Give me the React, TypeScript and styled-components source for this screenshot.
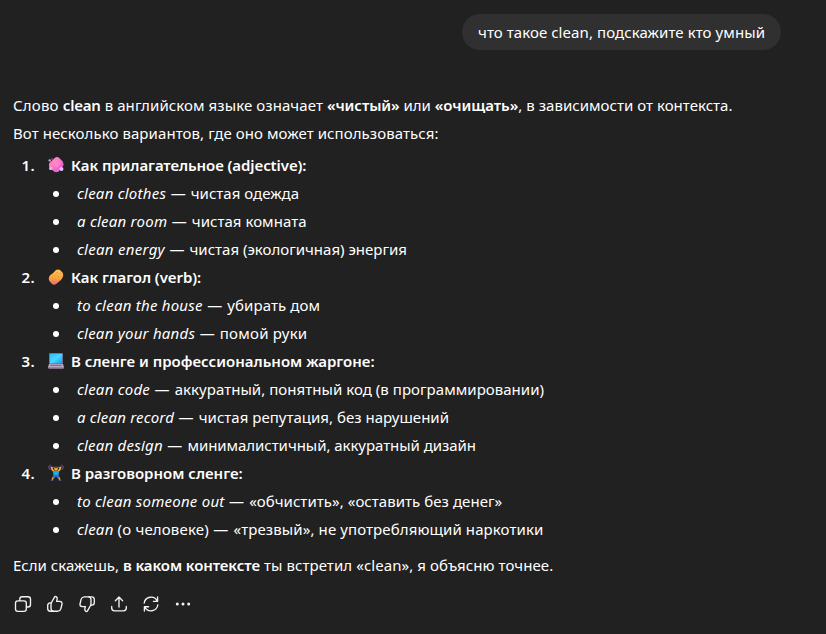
import React from 'react';
import styled, { createGlobalStyle } from 'styled-components';

const GlobalStyle = createGlobalStyle`
  * { box-sizing: border-box; }
  body {
    margin: 0;
    background: #212121;
    color: #fff;
    font-family: "Noto Sans", "Open Sans", sans-serif;
    font-size: 15px;
    line-height: 28px;
    letter-spacing: 0.08px;
  }
`;

const Thread = styled.main`
  display: flex;
  flex-direction: column;
  height: 634px;
  padding: 14px 45px 0 13px;
  overflow: hidden;
  white-space: nowrap;
`;

const UserBubble = styled.div`
  align-self: flex-end;
  width: 319px;
  height: 36px;
  padding: 4px 16px;
  border-radius: 18px;
  background: #303030;
`;

const Answer = styled.article`
  margin-top: 41px;
`;

const Paragraph = styled.p`
  margin: 0;
`;

const Strong = styled.strong<{ $tracking?: number }>`
  font-weight: 600;
  letter-spacing: ${p => p.$tracking ?? -0.05}px;
`;

const Term = styled.em<{ $tracking?: number }>`
  font-style: italic;
  letter-spacing: ${p => p.$tracking ?? 0.24}px;
`;

const Run = styled.span<{ $tracking: number }>`
  letter-spacing: ${p => p.$tracking}px;
`;

const Sections = styled.ol`
  margin: 4px 0 8px;
  padding: 0;
  list-style: none;
`;

const Heading = styled.div`
  display: grid;
  grid-template-columns: 22px 16px 1fr;
  column-gap: 13px;
  align-items: center;
  height: 28px;
`;

const Ordinal = styled.span`
  font-weight: 600;
  letter-spacing: 0.4px;
  text-align: right;
`;

const Title = styled(Strong)`
  margin-left: -6px;
`;

const Meanings = styled.ul`
  margin: 0;
  padding: 0 0 0 40px;
  list-style: none;
`;

const Meaning = styled.li`
  display: flex;
  align-items: center;
  height: 28px;
  white-space: pre;

  &::before {
    content: "";
    width: 6px;
    height: 6px;
    margin: 2px 18px 0 0;
    border-radius: 50%;
    background: #fff;
  }
`;

const Toolbar = styled.div`
  display: flex;
  gap: 12px;
  margin-top: 15px;
`;

const ToolButton = styled.button`
  display: flex;
  width: 20px;
  height: 20px;
  padding: 0;
  border: 0;
  background: none;
  color: #f3f3f3;
`;

const Glyph = styled.svg`
  width: 20px;
  height: 20px;
  fill: none;
  stroke: currentColor;
  stroke-width: 1.35;
  stroke-linecap: round;
  stroke-linejoin: round;
`;

const Emoji = styled.svg`
  width: 16px;
  height: 16px;
  overflow: visible;
`;

const Soap = () => (
  <Emoji viewBox="0 0 16 16">
    <defs>
      <linearGradient id="soap" x1="0" y1="0" x2="1" y2="1">
        <stop offset="0" stopColor="#ff94ce" />
        <stop offset="0.5" stopColor="#ff72c3" />
        <stop offset="1" stopColor="#d04be0" />
      </linearGradient>
    </defs>
    <path d="M7 0.7Q9-0.5 11 .7L14.5 4.3Q16 6.5 15.2 9L10.8 14.1Q8.6 16 6 14.4L1.8 11Q.4 9 1.2 6.2Z" fill="url(#soap)" />
    <path d="M5.2 3.8L9 2.2L13 6.4L9 11L4 8Z" fill="#ff8ac8" opacity=".7" />
    <circle cx="2.7" cy="11.4" r="1.6" fill="#e9b4f4" />
    <circle cx="13.4" cy="12" r="2.1" fill="#e9bdf8" />
    <circle cx="1.7" cy="3.4" r="1.2" fill="#cfa3d9" />
    <circle cx="4" cy="2" r=".7" fill="#a883b7" />
    <circle cx="10" cy="14" r=".8" fill="#e7a2ef" />
  </Emoji>
);

const Sponge = () => (
  <Emoji viewBox="0 0 16 16">
    <defs>
      <linearGradient id="sponge" x1="0.5" y1="0" x2="0.5" y2="1">
        <stop offset="0" stopColor="#ffc554" />
        <stop offset="0.6" stopColor="#f9a33e" />
        <stop offset="1" stopColor="#f2647f" />
      </linearGradient>
    </defs>
    <path d="M8 1Q10-.1 12 1L14.5 3.5Q15.7 5.5 14.8 8Q14 10.2 12.4 11.4Q11 12.3 10 13.6L8.2 15Q6 16.3 4 15L1.4 12Q.2 10 1.2 7.6Q2.4 5.4 4.6 4.4Q6.4 3 8 1Z" fill="url(#sponge)" />
    <g fill="#e39030">
      <circle cx="9" cy="3.7" r=".6" /><circle cx="12.2" cy="4.3" r=".55" />
      <circle cx="7" cy="6.5" r=".6" /><circle cx="10.4" cy="7.4" r=".65" />
      <circle cx="4.3" cy="9.4" r=".6" /><circle cx="7.3" cy="10.3" r=".65" />
    </g>
  </Emoji>
);

const Laptop = () => (
  <Emoji viewBox="0 0 16 16">
    <defs>
      <linearGradient id="screen" x1="0" y1="0" x2="1" y2="1">
        <stop offset="0" stopColor="#29bdf2" />
        <stop offset="0.5" stopColor="#4bd6ff" />
        <stop offset="1" stopColor="#159be9" />
      </linearGradient>
    </defs>
    <rect x="1" y="0" width="14" height="11" rx="1" fill="#6f6590" />
    <rect x="1.8" y=".8" width="12.4" height="9.7" fill="url(#screen)" />
    <path d="M1 11H15L16 14.3Q16 15.4 15 15.4H1Q0 15.4 0 14.3Z" fill="#b9a9c6" />
    <path d="M2.3 11.8H13.7L14 13H2Z" fill="#7e718f" />
    <path d="M.1 14.2H16V15Q16 15.5 15 15.5H1Q0 15.5 .1 14.2Z" fill="#89799a" />
  </Emoji>
);

const Lifter = () => (
  <Emoji viewBox="0 0 16 16" fill="none" strokeLinecap="round">
    <path d="M1 2.3H15" stroke="#776a89" strokeWidth="1" />
    <path d="M2 .5V4M14 .5V4" stroke="#4c3c60" strokeWidth="2" />
    <path d="M.5 1.4V3.4M15.5 1.4V3.4" stroke="#4c3c60" strokeWidth="1" />
    <path d="M3.8 2.6L4.2 4.5L6.1 6.5M12.2 2.6L11.8 4.5L9.9 6.5" stroke="#f8b72e" strokeWidth="1.7" />
    <circle cx="8" cy="3.8" r="1.9" fill="#f9b72e" />
    <path d="M6.2 3.2Q6.3 1.4 8 1.4T9.8 3.2Z" fill="#72463e" />
    <path d="M5 6H11L10.5 10.7H5.5Z" fill="#21a9ed" />
    <path d="M5.5 10.2H10.5L12 12.6L10 13.4L8 11.8L6 13.4L4 12.6Z" fill="#336ccc" />
    <path d="M5 13L4.3 14.6M11 13L11.7 14.6" stroke="#f5aa35" strokeWidth="1.5" />
    <path d="M3.2 15.3H4.8M11.2 15.3H12.8" stroke="#5b4770" strokeWidth="1.3" />
  </Emoji>
);

const thumb = (
  <>
    <path d="M6.5 8.5L9.5 3.1Q10.1 2.2 11.1 2.7Q12.5 3.5 12.2 5.1L11.6 7.4H14.8Q17.4 7.7 17 10L15.9 14.6Q15.3 17 12.9 17.2H8.2Q6 16.8 6 14.4V11Q6 9.4 6.5 8.5Z" />
    <path d="M6.3 8.8H5.2Q2.7 9 2.7 11.5V14.5Q2.7 17.2 5.3 17.2H8.2" />
  </>
);

const tools = [
  {
    label: 'Копировать',
    art: (
      <>
        <rect x="2.5" y="6.8" width="10.8" height="10.5" rx="2.3" />
        <path d="M6.8 6.6V5Q6.8 2.7 9.1 2.7H15Q17.5 2.7 17.5 5.2V10.5Q17.5 13 15 13H13.5" />
      </>
    ),
  },
  { label: 'Хороший ответ', art: thumb },
  { label: 'Плохой ответ', art: <g transform="rotate(180 10 10)">{thumb}</g> },
  {
    label: 'Поделиться',
    art: <path d="M10 13V3.4M6.4 6.7L10 3.1L13.6 6.7M2.7 12.5V14Q2.7 16.8 5.5 16.8H14.5Q17.3 16.8 17.3 14V12.5" />,
  },
  {
    label: 'Повторить',
    art: <path d="M3.2 9A6.9 6.9 0 0 1 16.2 7M16.6 3V7.3H12.4M16.8 11A6.9 6.9 0 0 1 3.8 13M3.4 17V12.7H7.6" />,
  },
  {
    label: 'Ещё',
    art: (
      <g fill="currentColor" stroke="none">
        <circle cx="4.3" cy="10" r="1.5" /><circle cx="10" cy="10" r="1.5" /><circle cx="15.7" cy="10" r="1.5" />
      </g>
    ),
  },
];

type Entry = { term: string; note?: string; text: string; termTracking?: number; tracking: number };
type Section = { icon: React.ReactNode; title: string; tracking: number; entries: Entry[] };

const sections: Section[] = [
  {
    icon: <Soap />,
    title: 'Как прилагательное (adjective):',
    tracking: -0.08,
    entries: [
      { term: 'clean clothes', text: 'чистая одежда', tracking: 0.02 },
      { term: 'a clean room', text: 'чистая комната', tracking: 0.03 },
      { term: 'clean energy', text: 'чистая (экологичная) энергия', termTracking: 0.29, tracking: 0 },
    ],
  },
  {
    icon: <Sponge />,
    title: 'Как глагол (verb):',
    tracking: -0.06,
    entries: [
      { term: 'to clean the house', text: 'убирать дом', tracking: 0.08 },
      { term: 'clean your hands', text: 'помой руки', tracking: 0.24 },
    ],
  },
  {
    icon: <Laptop />,
    title: 'В сленге и профессиональном жаргоне:',
    tracking: 0,
    entries: [
      { term: 'clean code', text: 'аккуратный, понятный код (в программировании)', tracking: 0.04 },
      { term: 'a clean record', text: 'чистая репутация, без нарушений', termTracking: 0.19, tracking: 0.02 },
      { term: 'clean design', text: 'минималистичный, аккуратный дизайн', termTracking: 0.22, tracking: -0.05 },
    ],
  },
  {
    icon: <Lifter />,
    title: 'В разговорном сленге:',
    tracking: -0.02,
    entries: [
      { term: 'to clean someone out', text: '«обчистить», «оставить без денег»', tracking: 0.05 },
      { term: 'clean', note: ' (о человеке)', text: '«трезвый», не употребляющий наркотики', tracking: 0.1 },
    ],
  },
];

export default function App() {
  return (
    <>
      <GlobalStyle />
      <Thread>
        <UserBubble>что такое clean, подскажите кто умный</UserBubble>
        <Answer>
          <Paragraph>
            <Run $tracking={0.2}>Слово </Run>
            <Strong $tracking={-0.2}>clean</Strong> в английском языке означает{' '}
            <Strong $tracking={-0.1}>«чистый»</Strong>
            <Run $tracking={-0.02}> или </Run>
            <Strong $tracking={-0.03}>«очищать»</Strong>
            <Run $tracking={0.03}>, в зависимости от контекста.</Run>
          </Paragraph>
          <Paragraph>Вот несколько вариантов, где оно может использоваться:</Paragraph>
          <Sections>
            {sections.map((section, index) => (
              <li key={section.title}>
                <Heading>
                  <Ordinal>{index + 1}.</Ordinal>
                  {section.icon}
                  <Title $tracking={section.tracking}>{section.title}</Title>
                </Heading>
                <Meanings>
                  {section.entries.map(entry => (
                    <Meaning key={entry.term}>
                      <Term $tracking={entry.termTracking}>{entry.term}</Term>
                      {entry.note && <Run $tracking={0.16}>{entry.note}</Run>}
                      <Run $tracking={0.6}>{' — '}</Run>
                      <Run $tracking={entry.tracking}>{entry.text}</Run>
                    </Meaning>
                  ))}
                </Meanings>
              </li>
            ))}
          </Sections>
          <Paragraph>
            <Run $tracking={0.02}>Если скажешь, </Run>
            <Strong $tracking={-0.09}>в каком контексте</Strong> ты встретил «clean», я объясню точнее.
          </Paragraph>
        </Answer>
        <Toolbar>
          {tools.map(tool => (
            <ToolButton key={tool.label} aria-label={tool.label}>
              <Glyph viewBox="0 0 20 20">{tool.art}</Glyph>
            </ToolButton>
          ))}
        </Toolbar>
      </Thread>
    </>
  );
}
